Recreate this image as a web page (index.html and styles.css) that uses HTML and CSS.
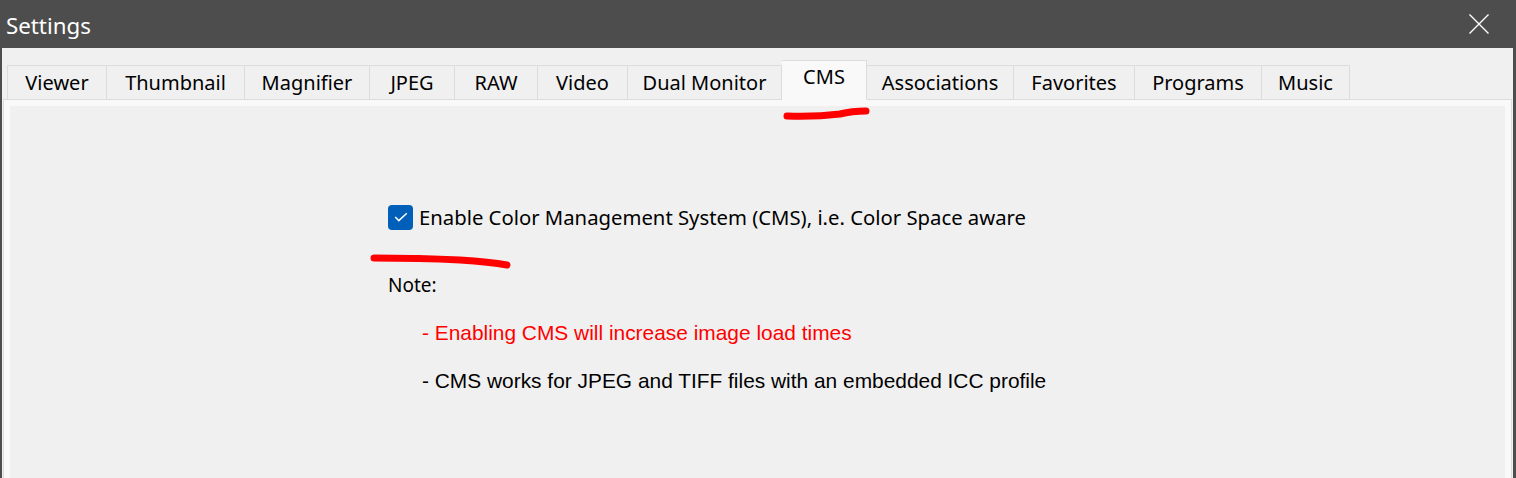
FILE: index.html
```html
<!DOCTYPE html>
<html>
	<head>
		<meta charset="utf-8">
		<title>Settings</title>
		<link rel="stylesheet" href="styles.css">
	</head>
	<body>
		<div class="window">
			<div class="titlebar">
				<span class="title">Settings</span>
				<svg class="close" width="22" height="22" viewBox="0 0 22 22">
					<path d="M1.5 1.5 L20.5 20.5 M20.5 1.5 L1.5 20.5" stroke="#fff" stroke-width="1.4" fill="none"/>
				</svg>
			</div>
			<div class="client">
				<div class="tabs">
					<div class="tab">Viewer</div>
					<div class="tab">Thumbnail</div>
					<div class="tab">Magnifier</div>
					<div class="tab">JPEG</div>
					<div class="tab">RAW</div>
					<div class="tab">Video</div>
					<div class="tab">Dual Monitor</div>
					<div class="tab active">CMS</div>
					<div class="tab">Associations</div>
					<div class="tab">Favorites</div>
					<div class="tab">Programs</div>
					<div class="tab">Music</div>
				</div>
				<div class="panel">
					<div class="panel-inner">
						<div class="cms">
							<label class="check-row">
								<span class="checkbox">
									<svg width="14" height="10" viewBox="0 0 14 10">
										<path d="M1.2 5 L4.8 8.6 L12.8 1.2" stroke="#fff" stroke-width="1.5" fill="none"/>
									</svg>
								</span>
								<span>Enable Color Management System (CMS), i.e. Color Space aware</span>
							</label>
							<div class="note">Note:</div>
							<ul class="notes">
								<li class="warn">- Enabling CMS will increase image load times</li>
								<li>- CMS works for JPEG and TIFF files with an embedded ICC profile</li>
							</ul>
						</div>
					</div>
				</div>
			</div>
			<!-- hand drawn marks over the screenshot -->
			<svg class="marks" width="1516" height="478">
				<path d="M787 116 Q815 117 840 114 Q852 111 866 111" stroke="#ff0000" stroke-width="7" stroke-linecap="round" fill="none"/>
				<path d="M374 258 Q420 258 460 260 Q490 262 507 265" stroke="#ff0000" stroke-width="7" stroke-linecap="round" fill="none"/>
			</svg>
		</div>
	</body>
</html>
```
FILE: styles.css
```css
html, body{
	margin: 0;
	padding: 0;
}
body{
	font-family: "Noto Sans", "Open Sans", sans-serif;
	background: #4d4d4d;
}
.window{
	position: relative;
	width: 1516px;
	height: 478px;
	box-sizing: border-box;
	background: #4d4d4d;
	border-radius: 8px 8px 0 0;
	padding: 0 3px 0 2px;
	display: flex;
	flex-direction: column;
	overflow: hidden;
}
.titlebar{
	height: 48px;
	flex: none;
	display: flex;
	align-items: center;
	justify-content: space-between;
	padding: 0 23px 0 4px;
}
.title{
	color: #fff;
	font-size: 22.3px;
	margin-top: 2px;
}
.close{
	display: block;
	margin-top: -1px;
}
.client{
	flex: 1;
	display: flex;
	flex-direction: column;
	background: #f0f0f0;
	padding: 13px 1px 0 1px;
	min-height: 0;
}
.tabs{
	display: flex;
	align-items: flex-end;
	margin-left: 4px;
	height: 39px;
	flex: none;
	position: relative;
	z-index: 1;
	margin-bottom: -1px;
}
.tab{
	height: 35px;
	box-sizing: border-box;
	border: 1px solid #dcdcdc;
	border-left: none;
	border-bottom: 1px solid #dcdcdc;
	background: #f0f0f0;
	font-size: 20px;
	color: #000;
	display: flex;
	align-items: center;
	justify-content: center;
	white-space: nowrap;
}
.tab:first-child{
	border-left: 1px solid #dcdcdc;
	width: 100px;
}
/* tab widths follow the caption widths of the original dialog */
.tab:nth-child(2){ width: 138px; }
.tab:nth-child(3){ width: 125px; }
.tab:nth-child(4){ width: 85px; }
.tab:nth-child(5){ width: 83px; }
.tab:nth-child(6){ width: 90px; }
.tab:nth-child(7){ width: 154px; }
.tab:nth-child(8){ width: 85px; }
.tab:nth-child(9){ width: 147px; }
.tab:nth-child(10){ width: 121px; }
.tab:nth-child(11){ width: 127px; }
.tab:nth-child(12){ width: 88px; }
.tab.active{
	height: 40px;
	background: #f9f9f9;
	border-bottom-color: #f9f9f9;
	padding-bottom: 7px;
}
.panel{
	flex: 1;
	border: 1px solid #dcdcdc;
	border-bottom: none;
	background: #f9f9f9;
	padding: 6px 6px 0 6px;
	display: flex;
	min-height: 0;
}
.panel-inner{
	flex: 1;
	background: #f0f0f0;
}
.cms{
	margin: 98px 0 0 378px;
	display: flex;
	flex-direction: column;
}
.check-row{
	display: flex;
	align-items: center;
	gap: 6px;
	font-size: 20.3px;
	height: 26px;
}
.checkbox{
	width: 25px;
	height: 25px;
	border-radius: 4px;
	background: #005fb8;
	display: flex;
	align-items: center;
	justify-content: center;
}
.checkbox svg{
	display: block;
}
.note{
	margin-top: 42px;
	font-size: 19px;
	line-height: 26px;
}
.notes{
	list-style: none;
	margin: 22px 0 0 34px;
	padding: 0;
	font-family: "Liberation Sans", Arial, sans-serif;
	font-size: 20.9px;
}
.notes li{
	height: 26px;
	line-height: 26px;
	margin-bottom: 22px;
}
.notes .warn{
	color: #ff0000;
}
.marks{
	position: absolute;
	left: 0;
	top: 0;
	pointer-events: none;
}
```
